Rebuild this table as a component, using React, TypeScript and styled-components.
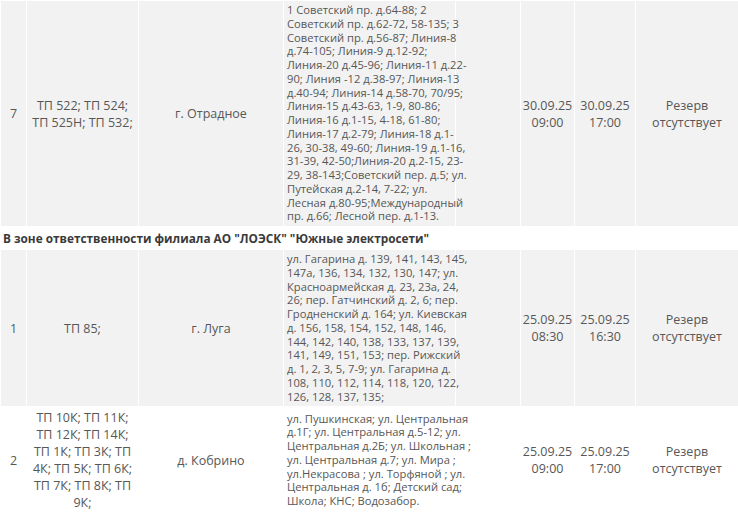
import React from "react";
import styled, { createGlobalStyle } from "styled-components";

const GlobalStyle = createGlobalStyle`
  html, body {
    margin: 0;
    padding: 0;
    background: #ffffff;
  }
  body {
    font-family: "Open Sans", "Liberation Sans", sans-serif;
    color: #595959;
  }
`;

interface Outage {
  num: string;
  tp: string;
  place: string;
  // lines kept as in the source table so the wrapping matches
  streets: string[];
  fromDate: string;
  fromTime: string;
  toDate: string;
  toTime: string;
  reserve: string;
}

type Row = { kind: "section"; title: string } | ({ kind: "item" } & Outage);

const rows: Row[] = [
  {
    kind: "item",
    num: "7",
    tp: "ТП 522; ТП 524; ТП 525Н; ТП 532;",
    place: "г. Отрадное",
    streets: [
      "1 Советский пр. д.64-88; 2",
      "Советский пр. д.62-72, 58-135; 3",
      "Советский пр. д.56-87; Линия-8",
      "д.74-105; Линия-9 д.12-92;",
      "Линия-20 д.45-96; Линия-11 д.22-",
      "90; Линия -12 д.38-97; Линия-13",
      "д.40-94; Линия-14 д.58-70, 70/95;",
      "Линия-15 д.43-63, 1-9, 80-86;",
      "Линия-16 д.1-15, 4-18, 61-80;",
      "Линия-17 д.2-79; Линия-18 д.1-",
      "26, 30-38, 49-60; Линия-19 д.1-16,",
      "31-39, 42-50;Линия-20 д.2-15, 23-",
      "29, 38-143;Советский пер. д.5; ул.",
      "Путейская д.2-14, 7-22; ул.",
      "Лесная д.80-95;Международный",
      "пр. д.66; Лесной пер. д.1-13.",
    ],
    fromDate: "30.09.25",
    fromTime: "09:00",
    toDate: "30.09.25",
    toTime: "17:00",
    reserve: "Резерв отсутствует",
  },
  {
    kind: "section",
    title: 'В зоне ответственности филиала АО "ЛОЭСК" "Южные электросети"',
  },
  {
    kind: "item",
    num: "1",
    tp: "ТП 85;",
    place: "г. Луга",
    streets: [
      "ул. Гагарина д. 139, 141, 143, 145,",
      "147а, 136, 134, 132, 130, 147; ул.",
      "Красноармейская д. 23, 23а, 24,",
      "26; пер. Гатчинский д. 2, 6; пер.",
      "Гродненский д. 164; ул. Киевская",
      "д. 156, 158, 154, 152, 148, 146,",
      "144, 142, 140, 138, 133, 137, 139,",
      "141, 149, 151, 153; пер. Рижский",
      "д. 1, 2, 3, 5, 7-9; ул. Гагарина д.",
      "108, 110, 112, 114, 118, 120, 122,",
      "126, 128, 137, 135;",
    ],
    fromDate: "25.09.25",
    fromTime: "08:30",
    toDate: "25.09.25",
    toTime: "16:30",
    reserve: "Резерв отсутствует",
  },
  {
    kind: "item",
    num: "2",
    tp: "ТП 10К; ТП 11К; ТП 12К; ТП 14К; ТП 1К; ТП 3К; ТП 4К; ТП 5К; ТП 6К; ТП 7К; ТП 8К; ТП 9К;",
    place: "д. Кобрино",
    streets: [
      "ул. Пушкинская; ул. Центральная",
      "д.1Г; ул. Центральная д.5-12; ул.",
      "Центральная д.2Б; ул. Школьная ;",
      "ул. Центральная д.7; ул. Мира ;",
      "ул.Некрасова ; ул. Торфяной ; ул.",
      "Центральная д. 1б; Детский сад;",
      "Школа; КНС; Водозабор.",
    ],
    fromDate: "25.09.25",
    fromTime: "09:00",
    toDate: "25.09.25",
    toTime: "17:00",
    reserve: "Резерв отсутствует",
  },
];

const colWidths = [26, 112, 145, 172, 65, 54, 61, 103];

const Table = styled.table`
  width: 738px;
  table-layout: fixed;
  border-collapse: collapse;
  font-size: 12.5px;
  line-height: 17px;
`;

const Tr = styled.tr`
  &:nth-child(odd) {
    background: #f2f2f2;
  }
  &:nth-child(even) {
    background: #ffffff;
  }
`;

const Td = styled.td<{ $pad?: string }>`
  border: 1px solid #ffffff;
  padding: ${(p) => p.$pad || "2px 3px"};
  text-align: center;
  vertical-align: middle;
  color: #575757;
`;

const StreetsCell = styled(Td)`
  text-align: left;
  font-size: 11.2px;
  line-height: 13.75px;
  padding: 2px 0 3px 3px;
`;

const Line = styled.span`
  display: block;
  white-space: nowrap;
`;

const SectionCell = styled.td`
  border: 1px solid #ffffff;
  padding: 3px 2px 2px;
  font-size: 11.8px;
  font-weight: 700;
  line-height: 17px;
  color: #3a3a3a;
  text-align: left;
`;

export default function App() {
  return (
    <>
      <GlobalStyle />
      <Table>
        <colgroup>
          {colWidths.map((w, i) => (
            <col key={i} style={{ width: w }} />
          ))}
        </colgroup>
        <tbody>
          {rows.map((r, i) =>
            r.kind === "section" ? (
              <Tr key={i}>
                <SectionCell colSpan={8}>{r.title}</SectionCell>
              </Tr>
            ) : (
              <Tr key={i}>
                <Td $pad="2px 1px">{r.num}</Td>
                <Td>{r.tp}</Td>
                <Td>{r.place}</Td>
                <StreetsCell>
                  {r.streets.map((s, j) => (
                    <Line key={j}>{s}</Line>
                  ))}
                </StreetsCell>
                <Td />
                <Td $pad="2px 0">
                  <Line>{r.fromDate}</Line>
                  <Line>{r.fromTime}</Line>
                </Td>
                <Td $pad="2px 0">
                  <Line>{r.toDate}</Line>
                  <Line>{r.toTime}</Line>
                </Td>
                <Td>{r.reserve}</Td>
              </Tr>
            )
          )}
        </tbody>
      </Table>
    </>
  );
}
